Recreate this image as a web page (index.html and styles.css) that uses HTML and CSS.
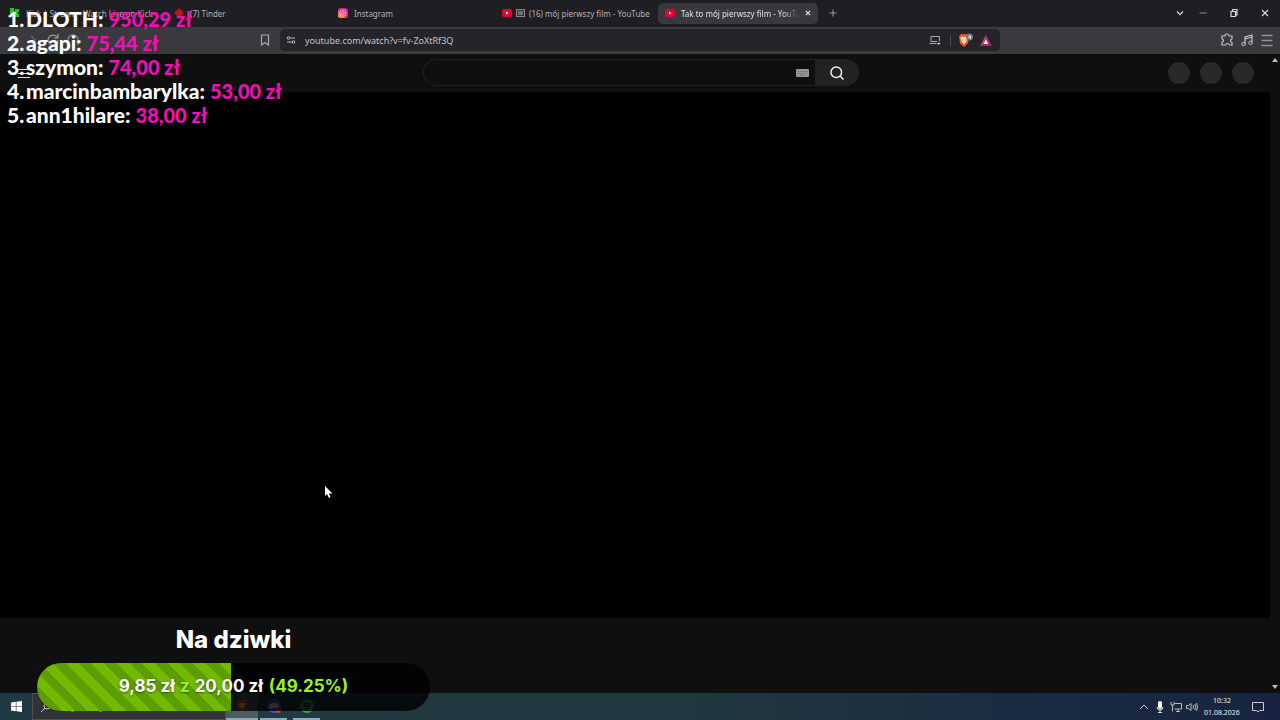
FILE: index.html
```html
<!DOCTYPE html>
<html lang="pl">
<head>
<meta charset="utf-8">
<title>Tak to mój pierwszy film - YouTube</title>
<link rel="stylesheet" href="styles.css">
</head>
<body>
<div class="screen">
  <nav class="tabs">
    <a class="tab" href="#"><svg class="fav" viewBox="0 0 10 10"><path fill="#22c31b" d="M0 0h4v3h1V1h4v3H8v2h1v3H5V7H4v2H0z"/></svg><span>Kick | Stream - Watch Live on Kick</span></a>
    <a class="tab" href="#"><svg class="fav" viewBox="0 0 10 10"><path fill="#c3101d" d="M5 0l5 5-5 5-5-5z"/></svg><span>(7) Tinder</span></a>
    <a class="tab" href="#"><svg class="fav" viewBox="0 0 10 10"><defs><linearGradient id="ig" x1="1" y1="0" x2="0" y2="1"><stop offset="0" stop-color="#a91bd0"/><stop offset=".5" stop-color="#ed1d68"/><stop offset="1" stop-color="#ffc34a"/></linearGradient></defs><rect width="10" height="10" rx="2.5" fill="url(#ig)"/><rect x="2" y="2" width="6" height="6" rx="2" fill="none" stroke="#f6cfe0" stroke-width=".8"/><circle cx="5" cy="5" r="1.4" fill="none" stroke="#f6cfe0" stroke-width=".8"/></svg><span>Instagram</span></a>
    <a class="tab wide" href="#"><svg class="fav" viewBox="0 0 10 10"><rect y="1" width="10" height="8" rx="2" fill="#e0052d"/><path fill="#fff" d="M4 3.5v3L6.5 5z"/></svg><svg class="pip" viewBox="0 0 9 8"><rect x=".5" y=".5" width="8" height="7" fill="#333" stroke="#888"/><path d="M2 3h5M2 5h5" stroke="#aaa"/></svg><span>(16) mój pierwszy film - YouTube</span></a>
    <a class="tab active" href="#"><svg class="fav" viewBox="0 0 10 10"><rect y="1" width="10" height="8" rx="2" fill="#e0052d"/><path fill="#fff" d="M4 3.5v3L6.5 5z"/></svg><span class="fade">Tak to mój pierwszy film - YouTube</span><svg class="close" viewBox="0 0 6 6"><path d="M.8.8l4.4 4.4M5.2.8L.8 5.2" stroke="#ddd" stroke-width="1.2"/></svg></a>
    <button class="plus" aria-label="Nowa karta"><svg viewBox="0 0 8 8"><path d="M4 .5v7M.5 4h7" stroke="#999"/></svg></button>
    <div class="window">
      <button aria-label="Szukaj kart"><svg viewBox="0 0 10 10"><path d="M2 3.5l3 3 3-3" fill="none" stroke="#ccc" stroke-width="1.3"/></svg></button>
      <button aria-label="Minimalizuj"><svg viewBox="0 0 10 10"><path d="M1.5 5h7" stroke="#888"/></svg></button>
      <button aria-label="Przywróć"><svg viewBox="0 0 10 10"><path d="M2 3.5h4.500V8.500H2zM3.500 3.500v-2h4.500v5.500H6.500" fill="none" stroke="#ddd" stroke-width="1.2"/></svg></button>
      <button aria-label="Zamknij"><svg viewBox="0 0 10 10"><path d="M2 2l6 6M8 2l-6 6" stroke="#ddd" stroke-width="1.1"/></svg></button>
    </div>
  </nav>
  <header class="toolbar">
    <div class="history">
      <svg viewBox="0 0 14 14"><path d="M9 3L5 7l4 4" fill="none" stroke="#4a494d" stroke-width="1.2"/></svg>
      <svg viewBox="0 0 14 14"><path d="M5 3l4 4-4 4" fill="none" stroke="#66656a" stroke-width="1.2"/></svg>
      <svg viewBox="0 0 14 14"><path d="M12 7A5 5 0 1 1 10.5 3.5L12 5M12 1v4H8" fill="none" stroke="#999" stroke-width="1.2"/></svg>
      <svg viewBox="0 0 14 14"><path d="M2 12V6q1-4 5-4t5 4v6" fill="none" stroke="#8a8a8a" stroke-width="1.2"/></svg>
    </div>
    <svg class="bookmark" viewBox="0 0 10 12"><path d="M1.5 1h7v10L5 8.5 1.5 11z" fill="none" stroke="#aaa" stroke-width="1.2"/></svg>
    <div class="address">
      <svg class="tune" viewBox="0 0 10 10"><path d="M4 3h5M1 7h5" stroke="#bbb" stroke-width="1.1"/><circle cx="2.500" cy="3" r="1.3" fill="none" stroke="#bbb"/><circle cx="7.500" cy="7" r="1.3" fill="none" stroke="#bbb"/></svg>
      <input class="url" aria-label="Adres" value="youtube.com/watch?v=fv-ZoXtRf3Q">
      <svg class="cast" viewBox="0 0 12 10"><path d="M2 7V1.500h8.500V6M.5 8.500h7M8 8.500h3.500M9.800 7v3M2 6.500h6" fill="none" stroke="#aaa"/></svg>
      <i class="sep"></i>
      <svg class="lion" viewBox="0 0 17 14"><path fill="#e95524" d="M3 1h6l2 2-.8 7-4.200 4L2 10.500 1 3.500z"/><path fill="#ffe2cd" d="M3 3.500l3 .5 3-.5.5 2.500-1.500 3L6 11.500 4 9 2.500 6z"/><path fill="#e95524" d="M4 6l1.500 1L4.500 8zM8 6L6.500 7l1 1z"/><circle cx="11.500" cy="4" r="3.500" fill="#75757b"/><path d="M12 2l-1.500 2.500H13M12.500 3v3" stroke="#eee" stroke-width=".8" fill="none"/></svg>
      <svg class="bat" viewBox="0 0 12 11"><path fill="#d94250" d="M6 0L0 11l6-3.500z"/><path fill="#8c2b86" d="M6 0l6 11-6-3.500z"/><path fill="#a92b65" d="M0 11h12L6 7z"/><path fill="#fff" d="M6 4.500L8.300 9H3.700z"/></svg>
    </div>
    <div class="extensions">
      <svg viewBox="0 0 14 14"><path d="M2 3h3q0-2 2-2t2 2h3v3q-1.500 0-1.500 1.500T12 9.500V12H9.500Q9 10.500 7.500 10.500T5.500 12H2V9q1.500 0 1.500-1.500T2 6z" fill="none" stroke="#c5c5c5" stroke-width="1.2"/></svg>
      <svg viewBox="0 0 14 14"><path d="M5 11V4l7-2v7.500M5 6l7-2" fill="none" stroke="#c5c5c5" stroke-width="1.2"/><circle cx="3.500" cy="11" r="1.700" fill="none" stroke="#c5c5c5"/><circle cx="10.500" cy="9.800" r="1.700" fill="none" stroke="#c5c5c5"/></svg>
      <svg viewBox="0 0 14 14"><path d="M1.500 2.500h11M1.500 7.500h11M1.500 12.500h11" stroke="#929196" stroke-width="1.3"/></svg>
    </div>
  </header>
  <main class="page">
    <div class="content">
      <header class="masthead">
        <svg class="guide" viewBox="0 0 12 12"><path d="M0 2.500h12M0 6.500h12M0 10.500h12" stroke="#ddd"/></svg>
        <form class="search"><input aria-label="Szukaj"><svg class="keyboard" viewBox="0 0 13 8"><rect width="13" height="8" rx="1" fill="#959595"/><path d="M2 2.500h9M2 4.500h9" stroke="#666" stroke-dasharray="1 1"/><path d="M4 6.500h5" stroke="#777"/></svg><button type="button" aria-label="Wyszukaj"><svg viewBox="0 0 14 14"><circle cx="6.300" cy="6.300" r="5.300" fill="none" stroke="#eee" stroke-width="1.5"/><path d="M10.200 10.200l3.300 3.300" stroke="#eee" stroke-width="1.5"/></svg></button></form>
        <div class="avatars"><i></i><i></i><i></i></div>
      </header>
      <div class="video"></div>
      <div class="below"></div>
    </div>
    <div class="scrollbar"><svg viewBox="0 0 6 4"><path fill="#bbb" d="M3 0l3 4H0z"/></svg><svg viewBox="0 0 6 4"><path fill="#bbb" d="M0 0h6L3 4z"/></svg></div>
  </main>
  <footer class="taskbar">
    <button class="start" aria-label="Start"><svg viewBox="0 0 11 11"><path fill="#fff" d="M0 1.500l4.800-.7v4.400H0zM5.400.7L11 0v5.200H5.400zM0 5.800h4.800v4.500L0 9.600zM5.400 5.800H11V11l-5.600-.7z"/></svg></button>
    <div class="tasksearch"><svg viewBox="0 0 10 10"><circle cx="6" cy="4" r="3" fill="none" stroke="#ccc"/><path d="M4 6L0 10" stroke="#ccc"/></svg><span>Wyszukaj</span></div>
    <button class="app current" aria-label="Brave"><svg viewBox="0 0 14 14"><path fill="#e34822" d="M3 1h8l2 3-1.500 6L7 13l-4.500-3L1 4z"/><path fill="#f8d8c8" d="M4 4h6l.5 2L7 10 3.500 6z"/></svg></button>
    <button class="app" aria-label="Discord"><svg viewBox="0 0 14 14"><circle cx="7" cy="7" r="7" fill="#4552cf"/><path fill="#ddd" d="M3 5q4-2 8 0l1 4-2 1-1-1H5l-1 1-2-1z"/><circle cx="11" cy="11" r="3" fill="#e43b42"/></svg></button>
    <button class="app" aria-label="Spotify"><svg viewBox="0 0 14 14"><circle cx="7" cy="7" r="7" fill="#20b458"/><path d="M3 5q4-1 8 0M3.500 7.500q3.500-1 7 0M4 10q3-1 6 0" fill="none" stroke="#112" stroke-width="1.3"/></svg></button>
    <div class="tray">
      <svg viewBox="0 0 12 12"><path d="M2 8l4-4 4 4" fill="none" stroke="#ccc"/></svg>
      <svg viewBox="0 0 12 12"><rect x="4" y="0" width="4" height="8" rx="2" fill="#fff"/><path d="M3 6q0 3 3 3t3-3M6 9v3M4 11.500h4" fill="none" stroke="#ddd"/></svg>
      <svg viewBox="0 0 12 12"><path d="M4.500 2.500h7v5.500h-7M8 8v2M6 10.500h4M1 1v3h3V1M2.500 4v6.500" fill="none" stroke="#bbb"/></svg>
      <svg viewBox="0 0 12 12"><path d="M.5 4.500h2l2.500-2v7l-2.500-2h-2zM7 4q1 2 0 4M8.800 3q2 3 0 6M10.500 2q2 4 0 8" fill="none" stroke="#ccc" stroke-width=".9"/></svg>
      <time>10:32<br>01.08.2026</time>
      <svg viewBox="0 0 12 12"><path d="M.5 1.500h11v8H7.500L6 11 4.500 9.500h-4z" fill="none" stroke="#ccc"/></svg>
    </div>
  </footer>
  <ol class="donors">
    <li><b>1.</b><span>DLOTH: <em>950,29 zł</em></span></li>
    <li><b>2.</b><span>agapi: <em>75,44 zł</em></span></li>
    <li><b>3.</b><span>szymon: <em>74,00 zł</em></span></li>
    <li><b>4.</b><span>marcinbambarylka: <em>53,00 zł</em></span></li>
    <li><b>5.</b><span>ann1hilare: <em>38,00 zł</em></span></li>
  </ol>
  <section class="goal">
    <h2>Na dziwki</h2>
    <div class="meter"><div class="fill" style="width:49.25%"></div><p>9,85 zł <em class="of">z</em> 20,00 zł <em class="share">(49.25%)</em></p></div>
  </section>
  <svg class="cursor" viewBox="0 0 8 12"><path fill="#fff" d="M0 0v10l2-2 2 4 1.500-.8L4 7.500h3.500z"/></svg>
</div>
</body>
</html>
```
FILE: styles.css
```css
* { box-sizing: border-box; }
body { margin: 0; background: #000; font-family: "Noto Sans", sans-serif; font-size: 8px; color: #aaa; }
button, input { font: inherit; color: inherit; border: 0; padding: 0; margin: 0; background: none; outline: 0; }
button { display: grid; place-items: center; }
svg { display: block; flex: none; }
.screen { position: relative; display: flex; flex-direction: column; height: 100vh; overflow: hidden; }

.tabs { display: flex; align-items: center; height: 27px; padding-bottom: 1px; flex: none; background: #1f1e23; }
.tab { display: flex; align-items: center; gap: 6px; width: 164px; height: 21px; padding: 0 10px; color: #b2b2b5; text-decoration: none; white-space: nowrap; overflow: hidden; border-radius: 5px; }
.tab.wide { gap: 4px; }
.tab.active { width: 160px; margin-left: 2px; padding: 0 7px; background: #39383d; color: #e2e2e4; }
.fav { width: 10px; height: 10px; }
.pip { width: 9px; height: 8px; }
.fade { flex: 1; min-width: 0; overflow: hidden; -webkit-mask-image: linear-gradient(90deg, #000 86%, transparent); mask-image: linear-gradient(90deg, #000 86%, transparent); }
.close { width: 6px; height: 6px; }
.plus { width: 30px; height: 20px; }
.plus svg { width: 8px; height: 8px; }
.window { display: flex; margin-left: auto; gap: 10px; padding-right: 5px; }
.window button { width: 21px; height: 20px; }
.window button:first-child { margin-right: -8px; }
.window svg { width: 10px; height: 10px; }

.toolbar { display: grid; grid-template-columns: 254px 26px 720px 1fr; align-items: center; height: 27px; padding-bottom: 1px; flex: none; background: #3a393d; }
.history { display: flex; gap: 6px; padding-left: 6px; }
.history svg, .extensions svg { width: 14px; height: 14px; }
.bookmark { width: 10px; height: 12px; margin-left: 6px; }
.address { display: flex; align-items: center; height: 22px; padding: 0 8px 0 6px; background: #252429; border-radius: 5px; }
.tune { width: 10px; height: 10px; }
.url { flex: 1; min-width: 0; margin-left: 9px; font-size: 9px; color: #c2c2c5; }
.cast { width: 12px; height: 10px; }
.sep { width: 1px; height: 11px; margin: 0 7px 0 9px; background: #4a494e; }
.lion { width: 17px; height: 14px; }
.bat { width: 12px; height: 11px; margin-left: 5px; }
.extensions { display: flex; justify-content: flex-end; gap: 6px; padding-right: 6px; }

.page { display: flex; flex: 1; min-height: 0; background: #0f0f0f; }
.content { display: flex; flex-direction: column; flex: 1; }
.masthead { display: grid; grid-template-columns: 1fr 436px 1fr; align-items: center; height: 38px; padding-bottom: 1px; }
.guide { width: 12px; height: 12px; margin-left: 18px; }
.search { position: relative; display: flex; width: 436px; height: 27px; margin-left: 6px; }
.search input { flex: 1; min-width: 0; background: #0f0f0f; border: 1px solid #202020; border-right: 0; border-radius: 14px 0 0 14px; }
.search button { width: 44px; background: #222; border-radius: 0 14px 14px 0; }
.search button svg { width: 14px; height: 14px; }
.keyboard { position: absolute; right: 50px; top: 10px; width: 13px; height: 8px; }
.avatars { display: flex; justify-content: flex-end; gap: 10px; padding-right: 16px; }
.avatars i { width: 22px; height: 22px; border-radius: 50%; background: #292929; }
.video { flex: 1; background: #000; }
.below { height: 75px; }
.scrollbar { display: flex; flex-direction: column; justify-content: space-between; align-items: center; width: 10px; padding: 4px 0; }
.scrollbar svg { width: 6px; height: 4px; }

.taskbar { display: flex; height: 27px; flex: none; background: linear-gradient(90deg, #213943 0%, #213840 54%, #1e2f3f 70%, #1a2a42 82%, #18243f 100%); }
.start { width: 32px; }
.start svg { width: 11px; height: 11px; }
.tasksearch { display: flex; align-items: center; gap: 12px; width: 194px; padding-left: 8px; background: #303335; border: 1px solid #4b5052; font-size: 9px; }
.tasksearch svg { width: 10px; height: 10px; }
.app { width: 27px; margin-right: 6px; border-bottom: 2px solid #8dabba; }
.app.current { width: 32px; margin-right: 2px; background: #4b5c62; }
.app svg { width: 14px; height: 14px; }
.tray { display: flex; align-items: center; gap: 4px; margin-left: auto; padding-right: 16px; color: #eee; font-size: 7px; line-height: 12px; text-align: center; }
.tray svg { width: 12px; height: 12px; }
.tray time { width: 40px; margin-right: 6px; white-space: nowrap; }

.donors { position: absolute; left: 7px; top: 7px; margin: 0; padding: 0; list-style: none; font: 900 21px/24px "Lato Black", Lato, sans-serif; color: #fff; white-space: nowrap; }
.donors li { display: flex; height: 24px; }
.donors b { width: 19px; font-weight: 900; }
.donors em { font-style: normal; font-size: 20px; color: #f010b4; }
.goal { position: absolute; left: 37px; bottom: 9px; width: 393px; text-align: center; color: #fff; }
.goal h2 { margin: 0 0 6px; font: 800 24px/34px Inter, sans-serif; }
.meter { position: relative; height: 48px; border-radius: 24px; overflow: hidden; background: rgba(0, 0, 0, .8); }
.fill { height: 100%; background: repeating-linear-gradient(45deg, #72b900 0 9px, #5b9d03 9px 18px); }
.meter p { position: absolute; inset: 0; margin: 0; font: 700 17px/46px Inter, sans-serif; text-shadow: 0 1px 2px rgba(0, 0, 0, .5); white-space: nowrap; }
.meter em { font-style: normal; color: #99f51b; }
.meter .of { margin: 0 1px; }
.meter .share { margin-left: 2px; }
.cursor { position: absolute; left: 325px; top: 486px; width: 8px; height: 12px; }
```
